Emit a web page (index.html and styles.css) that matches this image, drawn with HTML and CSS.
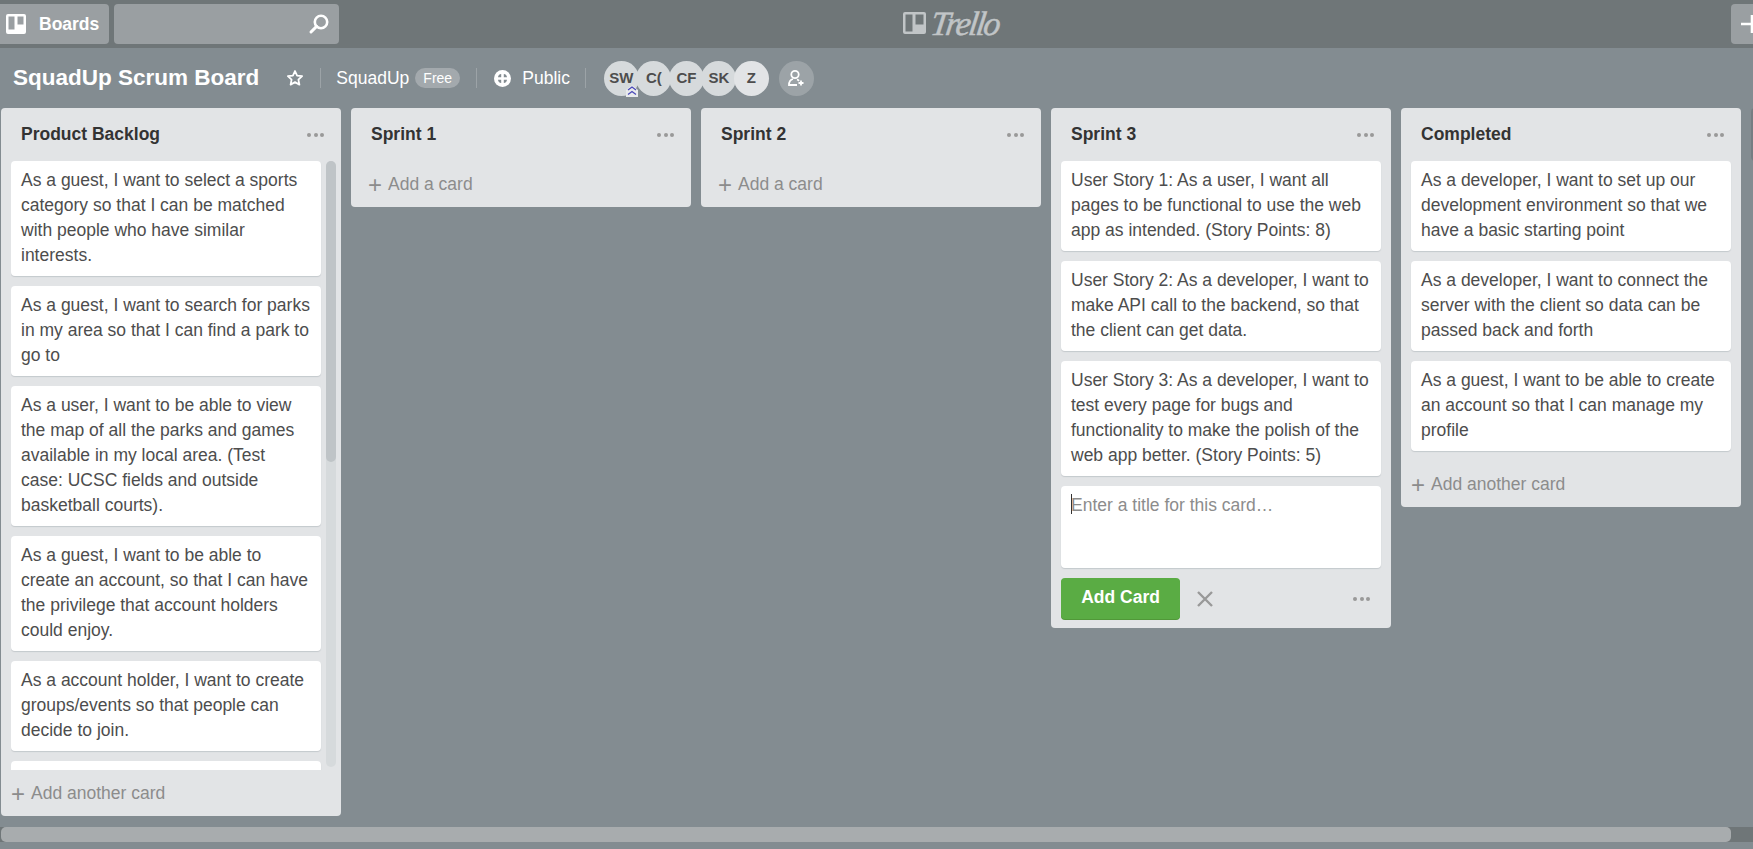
FILE: index.html
```html
<!DOCTYPE html>
<html lang="en">
<head>
  <meta charset="UTF-8" />
  <title>SquadUp Scrum Board | Trello</title>
  <link rel="stylesheet" href="styles.css">
</head>
<body>

<header class="topbar">
  <a class="top-btn boards-btn">
    <svg class="boards-icon" width="20" height="20" viewBox="0 0 20 20"><path fill="#fff" fill-rule="evenodd" d="M2 0h16a2 2 0 0 1 2 2v16a2 2 0 0 1-2 2H2a2 2 0 0 1-2-2V2a2 2 0 0 1 2-2zm0.5 2.5v13h6v-13zm9 0v8h6v-8z"/></svg>
    Boards
  </a>
  <div class="top-btn search">
    <svg width="22" height="22" viewBox="0 0 22 22"><circle cx="13" cy="9" r="6.2" fill="none" stroke="#fff" stroke-width="2.6"/><path d="M8.600 13.400L3 19" stroke="#fff" stroke-width="3" stroke-linecap="round"/></svg>
  </div>
  <div class="logo">
    <svg width="23" height="22" viewBox="0 0 23 22"><path fill="#c1c5c7" fill-rule="evenodd" d="M2 0h19a2 2 0 0 1 2 2v18a2 2 0 0 1-2 2H2a2 2 0 0 1-2-2V2a2 2 0 0 1 2-2zm0.5 2.500v17h7v-17zm10 0v10h8v-10z"/></svg>
    <span class="logo-text">Trello</span>
  </div>
  <div class="top-btn plus-btn">
    <svg width="12" height="18" viewBox="0 0 12 18"><path d="M0 9h12M11 0v18" stroke="#fff" stroke-width="2.6"/></svg>
  </div>
</header>

<div class="board-header">
  <h1 class="board-title">SquadUp Scrum Board</h1>
  <svg class="star" width="18" height="18" viewBox="0 0 18 18"><path d="M9 2l2.100 4.600 5 .6-3.700 3.400 1 5L9 13.100l-4.400 2.500 1-5L1.900 7.200l5-.6z" fill="none" stroke="#fff" stroke-width="1.800" stroke-linejoin="round"/></svg>
  <span class="sep"></span>
  <span class="hd-text">SquadUp</span>
  <span class="badge">Free</span>
  <span class="sep sep-b"></span>
  <svg class="globe" width="17" height="17" viewBox="0 0 17 17"><circle cx="8.500" cy="8.500" r="8.500" fill="#fff"/><path d="M4 7.200q.3-2.900 3.200-3.200v3.200zM13 7.200q-.3-2.900-3.200-3.200v3.200zM4 9.800q.3 2.900 3.200 3.200V9.800zM13 9.800q-.3 2.900-3.200 3.200V9.800z" fill="#838c91"/></svg>
  <span class="hd-text">Public</span>
  <span class="sep sep-c"></span>
  <div class="members">
    <div class="avatar">SW
      <svg class="admin" width="12" height="12" viewBox="0 0 12 12"><path d="M0 12V5l6-5 6 5v7z" fill="#e8eaec"/><path d="M2 5l4-3 4 3M2 9.500l4-3 4 3" fill="none" stroke="#4a48b8" stroke-width="1.300"/></svg>
    </div>
    <div class="avatar">C(</div>
    <div class="avatar">CF</div>
    <div class="avatar">SK</div>
    <div class="avatar avatar-last">Z</div>
    <div class="avatar add-member">
      <svg width="20" height="20" viewBox="0 0 20 20"><circle cx="9" cy="6.500" r="3.700" fill="none" stroke="#fff" stroke-width="1.800"/><path d="M7 11c-2 .5-4 2-4 6h8" fill="none" stroke="#fff" stroke-width="1.800"/><path d="M11 11.500c1 .3 1.500.7 2 1.300M15 12.500v5M12.500 15h5" fill="none" stroke="#fff" stroke-width="1.800"/></svg>
    </div>
  </div>
</div>

<main class="board">

  <section class="list">
    <div class="list-head"><h2>Product Backlog</h2><span class="dots"><i></i><i></i><i></i></span></div>
    <div class="list-scroll">
      <div class="cards">
        <div class="card">As a guest, I want to select a sports category so that I can be matched with people who have similar interests.</div>
        <div class="card">As a guest, I want to search for parks in my area so that I can find a park to go to</div>
        <div class="card">As a user, I want to be able to view the map of all the parks and games available in my local area. (Test case: UCSC fields and outside basketball courts).</div>
        <div class="card">As a guest, I want to be able to create an account, so that I can have the privilege that account holders could enjoy.</div>
        <div class="card">As a account holder, I want to create groups/events so that people can decide to join.</div>
        <div class="card">&nbsp;</div>
      </div>
      <div class="vbar"><div class="vthumb"></div></div>
    </div>
    <a class="add-card"><span class="plus">+</span> Add another card</a>
  </section>

  <section class="list">
    <div class="list-head"><h2>Sprint 1</h2><span class="dots"><i></i><i></i><i></i></span></div>
    <a class="add-card add-card-empty"><span class="plus">+</span> Add a card</a>
  </section>

  <section class="list">
    <div class="list-head"><h2>Sprint 2</h2><span class="dots"><i></i><i></i><i></i></span></div>
    <a class="add-card add-card-empty"><span class="plus">+</span> Add a card</a>
  </section>

  <section class="list">
    <div class="list-head"><h2>Sprint 3</h2><span class="dots"><i></i><i></i><i></i></span></div>
    <div class="card">User Story 1: As a user, I want all pages to be functional to use the web app as intended. (Story Points: 8)</div>
    <div class="card">User Story 2: As a developer, I want to make API call to the backend, so that the client can get data.</div>
    <div class="card">User Story 3: As a developer, I want to test every page for bugs and functionality to make the polish of the web app better. (Story Points: 5)</div>
    <div class="composer"><span class="caret"></span>Enter a title for this card…</div>
    <div class="composer-actions">
      <button class="btn-add">Add Card</button>
      <svg class="close" width="18" height="18" viewBox="0 0 18 18"><path d="M2 2l14 14M16 2L2 16" stroke="#999" stroke-width="2.400"/></svg>
      <span class="dots"><i></i><i></i><i></i></span>
    </div>
  </section>

  <section class="list">
    <div class="list-head"><h2>Completed</h2><span class="dots"><i></i><i></i><i></i></span></div>
    <div class="card">As a developer, I want to set up our development environment so that we have a basic starting point</div>
    <div class="card">As a developer, I want to connect the server with the client so data can be passed back and forth</div>
    <div class="card">As a guest, I want to be able to create an account so that I can manage my profile</div>
    <a class="add-card"><span class="plus">+</span> Add another card</a>
  </section>

  <div class="add-list"></div>

</main>

<div class="hscroll"><div class="hthumb"></div></div>

</body>
</html>
```

FILE: styles.css
```css
* {
  box-sizing: border-box;
}
html, body {
  height: 100%;
}
body {
  margin: 0;
  width: 1753px;
  height: 849px;
  overflow: hidden;
  display: flex;
  flex-direction: column;
  background-color: #838c91;
  font-family: "Liberation Sans", Arial, sans-serif;
  font-size: 17.5px;
  line-height: 25px;
  color: #4d4d4d;
}

/* top bar */
.topbar {
  position: relative;
  flex: none;
  height: 48px;
  display: flex;
  align-items: center;
  gap: 5px;
  background-color: #6f7678;
}
.top-btn {
  height: 40px;
  background-color: #9a9fa2;
  border-radius: 4px;
  display: flex;
  align-items: center;
  color: #fff;
}
.boards-btn {
  width: 109px;
  padding-left: 6px;
  gap: 13px;
  font-size: 17.5px;
  font-weight: bold;
  border-radius: 0 4px 4px 0;
}
.search {
  width: 225px;
  justify-content: flex-end;
  padding-right: 9px;
}
.plus-btn {
  margin-left: auto;
  width: 22px;
  justify-content: flex-end;
  border-radius: 4px 0 0 4px;
}
.logo {
  position: absolute;
  left: 903px;
  top: 6px;
  height: 34px;
  display: flex;
  align-items: center;
  gap: 5px;
  color: #c1c5c7;
}
.logo-text {
  font-family: "Liberation Serif", serif;
  font-style: italic;
  font-size: 34px;
  letter-spacing: -2px;
  -webkit-text-stroke: 0.5px #c1c5c7;
  transform: skewX(-8deg);
}

/* board header */
.board-header {
  flex: none;
  height: 60px;
  display: flex;
  align-items: center;
  padding-left: 13px;
  color: #fff;
}
.board-title {
  margin: 0;
  font-size: 22.5px;
  line-height: 30px;
  font-weight: bold;
}
.star {
  margin-left: 27px;
}
.sep {
  width: 1px;
  height: 20px;
  margin: 0 15px 0 16px;
  background-color: #9ca3a7;
}
.sep-b {
  margin-right: 17px;
}
.sep-c {
  margin: 0 18px 0 15px;
}
.hd-text {
  font-size: 17.5px;
}
.globe {
  margin-right: 11px;
}
.badge {
  margin-left: 6px;
  height: 20px;
  width: 45px;
  border-radius: 10px;
  background-color: #a3a9ad;
  font-size: 14px;
  line-height: 20px;
  text-align: center;
}
.members {
  display: flex;
}
.avatar {
  position: relative;
  width: 35px;
  height: 35px;
  margin-right: -2.500px;
  border-radius: 50%;
  background-color: #d6dadc;
  color: #4d4d4d;
  font-size: 15px;
  font-weight: bold;
  line-height: 34px;
  text-align: center;
}
.avatar-last {
  background-color: #e2e4e6;
  margin-right: 10px;
}
.add-member {
  background-color: #9ca3a7;
  display: flex;
  align-items: center;
  justify-content: center;
}
.admin {
  position: absolute;
  right: 1px;
  bottom: -1px;
}

/* lists */
.board {
  flex: 1;
  min-height: 0;
  display: flex;
  align-items: flex-start;
  gap: 10px;
  padding-left: 1px;
  overflow: hidden;
}
.list {
  flex: none;
  width: 340px;
  padding: 0 10px;
  background-color: #e2e4e6;
  border-radius: 4px;
}
.add-list {
  flex: none;
  width: 340px;
  height: 53px;
  border-radius: 4px;
  background-color: rgba(0, 0, 0, 0.1);
}
.list-head {
  height: 53px;
  padding-left: 10px;
  display: flex;
  align-items: center;
  justify-content: space-between;
}
.list-head h2 {
  margin: 0;
  font-size: 17.5px;
  font-weight: bold;
  color: #333;
}
.list-scroll {
  display: flex;
  gap: 5px;
  height: 609px;
  margin-right: -5px;
  overflow: hidden;
}
.cards {
  width: 310px;
  flex: none;
}
.vbar {
  width: 10px;
  height: 606px;
  flex: none;
  border-radius: 5px;
  background-color: #d6dadc;
}
.vthumb {
  height: 301px;
  border-radius: 5px;
  background-color: #bfc4c7;
}
.card {
  padding: 6.500px 10px 8.500px;
  margin-bottom: 10px;
  background-color: #fff;
  border-radius: 4px;
  box-shadow: 0 1px 1px #c4c9cc;
}
.add-card {
  display: flex;
  align-items: center;
  height: 46px;
  margin: 0 -2px;
  color: #8c8c8c;
}
.add-card-empty {
  margin-left: 5px;
}
.plus {
  width: 18px;
  font-size: 24px;
  font-weight: normal;
  text-align: center;
  margin-right: 4px;
}
.dots {
  display: flex;
  gap: 2.500px;
  margin-right: 7px;
}
.dots i {
  width: 4px;
  height: 4px;
  border-radius: 50%;
  background-color: #999;
}

/* composer */
.composer {
  position: relative;
  height: 82px;
  padding: 6.500px 10px;
  background-color: #fff;
  border-radius: 4px;
  box-shadow: 0 1px 1px #c4c9cc;
  color: #8c8c8c;
}
.caret {
  position: absolute;
  left: 10px;
  top: 8px;
  width: 1px;
  height: 20px;
  background-color: #333;
}
.composer-actions {
  display: flex;
  align-items: center;
  margin-top: 10px;
  padding-bottom: 9px;
}
.btn-add {
  width: 119px;
  height: 41px;
  padding: 0 0 2px;
  border: none;
  border-radius: 4px;
  background-color: #5aac44;
  box-shadow: 0 1px 0 #519839;
  color: #fff;
  font-family: inherit;
  font-size: 17.5px;
  font-weight: bold;
}
.close {
  margin-left: 16px;
}
.composer-actions .dots {
  margin-left: auto;
  margin-right: 11px;
}

/* horizontal scrollbar */
.hscroll {
  flex: none;
  height: 15px;
  margin: 11px 0 7px;
  background-color: #6f7678;
}
.hthumb {
  width: 1730px;
  height: 15px;
  margin-left: 1px;
  border-radius: 5px;
  background-color: #a8acae;
}
```
